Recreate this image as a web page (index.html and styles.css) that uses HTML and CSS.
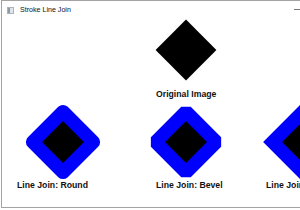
FILE: index.html
```html
<!DOCTYPE html>
<html lang="en">
<head>
    <meta charset="UTF-8">
    <title>Stroke Line Join</title>
    <link rel="stylesheet" href="styles.css">
</head>
<body>
    <!-- Window frame -->
    <div class="window">
        <div class="titlebar">
            <span class="app-icon"><span class="app-icon-bar"></span></span>
            <span class="title">Stroke Line Join</span>
            <div class="caption-btns">
                <span class="cap-btn"><span class="min-dash"></span></span>
                <span class="cap-btn"></span>
                <span class="cap-btn"></span>
            </div>
        </div>

        <div class="canvas">
            <!-- Original shape -->
            <div class="figure original">
                <svg width="62" height="62" viewBox="0 0 62 62">
                    <polygon points="31,0.6 61.4,31 31,61.4 0.6,31" fill="#000"/>
                </svg>
                <div class="label label-original">Original Image</div>
            </div>

            <!-- Stroked shapes -->
            <div class="joins">
                <div class="figure">
                    <svg class="join-shape" width="84" height="76" viewBox="0 0 84 76">
                        <polygon points="42,7.6 72.4,38 42,68.4 11.6,38" fill="#000" stroke="#0000ff" stroke-width="13.4" stroke-linejoin="round"/>
                    </svg>
                    <div class="label label-round">Line Join: Round</div>
                </div>
                <div class="figure">
                    <svg class="join-shape" width="84" height="76" viewBox="0 0 84 76">
                        <polygon points="42,7.6 72.4,38 42,68.4 11.6,38" fill="#000" stroke="#0000ff" stroke-width="13.4" stroke-linejoin="bevel"/>
                    </svg>
                    <div class="label label-bevel">Line Join: Bevel</div>
                </div>
                <div class="figure">
                    <svg class="join-shape" width="84" height="76" viewBox="0 0 84 76">
                        <polygon points="42,7.6 72.4,38 42,68.4 11.6,38" fill="#000" stroke="#0000ff" stroke-width="13.4" stroke-linejoin="miter"/>
                    </svg>
                    <div class="label label-miter">Line Join: Miter</div>
                </div>
            </div>
        </div>
    </div>
</body>
</html>
```

FILE: styles.css
```css
* {
    margin: 0;
    padding: 0;
    box-sizing: border-box;
}

body {
    background: #fff;
    overflow: hidden;
    width: 300px;
    height: 210px;
}

/* Window */
.window {
    margin-left: 1px;
    width: 413px;
    height: 208px;
    border: 1px solid #a3a3a3;
    border-right: none;
    background: #fff;
    display: flex;
    flex-direction: column;
}

.titlebar {
    height: 18px;
    display: flex;
    align-items: center;
    font-family: "Liberation Sans", Arial, sans-serif;
    font-size: 7.1px;
    color: #111;
}

.app-icon {
    width: 7px;
    height: 7px;
    margin-left: 5px;
    background: #dfe5ea;
    border: 1px solid #a9b3bb;
    display: flex;
}

.app-icon-bar {
    width: 2px;
    background: #8c9aa6;
}

.title {
    margin-left: 6px;
}

.caption-btns {
    margin-left: auto;
    display: flex;
    height: 100%;
}

.cap-btn {
    width: 46px;
    display: flex;
    align-items: center;
    justify-content: center;
}

.min-dash {
    width: 10px;
    height: 1px;
    background: #777;
    margin-top: -2px;
}

/* Drawing area */
.canvas {
    display: flex;
    flex-direction: column;
}

.figure {
    display: flex;
    flex-direction: column;
    align-items: flex-start;
}

.original {
    margin-left: 153px;
}

.label {
    font-family: "Liberation Sans", Arial, sans-serif;
    font-weight: bold;
    font-size: 8.7px;
    line-height: 10px;
    color: #111;
    white-space: nowrap;
}

.label-original {
    margin-top: 8px;
    margin-left: 1px;
}

.joins {
    display: grid;
    grid-template-columns: 123px 117px 1fr;
    margin-top: 5px;
}

.join-shape {
    margin-left: 19px;
    overflow: visible;
}

.label-round {
    margin-left: 15px;
}

.label-bevel {
    margin-left: 31px;
}

.label-miter {
    margin-left: 24px;
}
```
